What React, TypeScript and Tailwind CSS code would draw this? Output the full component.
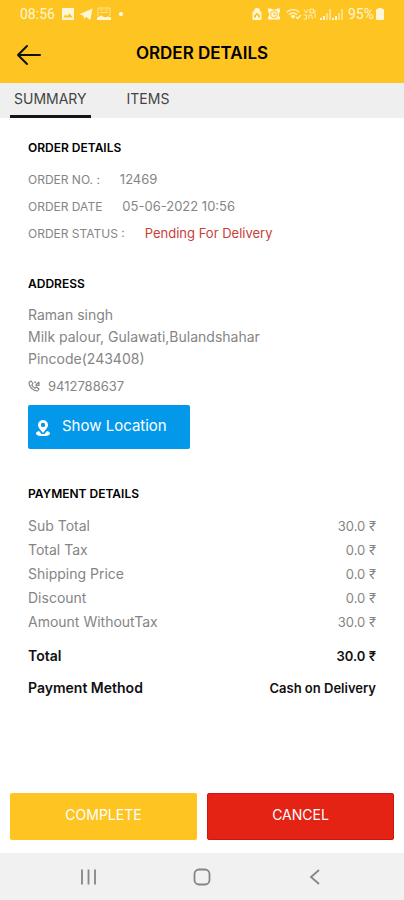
import React from 'react';

const charges = [
  { label: 'Sub Total', amount: '30.0' },
  { label: 'Total Tax', amount: '0.0' },
  { label: 'Shipping Price', amount: '0.0' },
  { label: 'Discount', amount: '0.0' },
  { label: 'Amount WithoutTax', amount: '30.0' },
];

const SignalIcon: React.FC = () => (
  <svg className="w-3 h-3" viewBox="0 0 12 12" fill="currentColor" aria-hidden="true">
    <path d="M0 12v-2h2v2zM3 12V8h2v4z" />
    <path d="M6 12V5h2v7zM9 12V1h2v11z" opacity=".55" />
  </svg>
);

const StatusBar: React.FC = () => (
  <div className="h-7 px-5 flex items-center justify-between text-[#fff6d8] text-sm">
    <div className="flex items-center">
      <span className="mr-1.5">08:56</span>
      <svg className="w-3.5 h-3.5 mr-1" viewBox="0 0 14 14" aria-hidden="true">
        <path fill="currentColor" fillRule="evenodd" d="M1 1h12v12H1zm1.500 9.500h9L8.700 6.500 6 9 4.200 7.500z" />
      </svg>
      <svg className="w-3.5 h-3.5 mr-1" viewBox="0 0 14 14" aria-hidden="true">
        <path fill="currentColor" d="M0.500 7.300 13.500 1.500 11.300 13 7 9.800 5 12 4.500 8.700z" />
      </svg>
      <svg className="w-3.5 h-3.5" viewBox="0 0 14 14" fill="none" stroke="currentColor" aria-hidden="true">
        <path d="M1 9V1h12v8M3 3h3M8 3h3M3 5.500h8" opacity=".6" />
        <path d="M0 13v-2.500l4-2 4 2 3-1 3 1V13z" fill="currentColor" stroke="none" />
      </svg>
      <span className="ml-2 w-1 h-1 rounded-full bg-white"></span>
    </div>

    <div className="flex items-center">
      <svg className="w-2.5 h-3 mr-1.5" viewBox="0 0 10 12" aria-hidden="true">
        <path fill="currentColor" fillRule="evenodd" d="M2 3a3 3 0 0 1 6 0l1.500 1v7a1 1 0 0 1-1 1h-7a1 1 0 0 1-1-1V4zM2 9.500h6V7.500L5 4.500l-3 3zM4 7.500h2v2H4z" />
      </svg>
      <svg className="w-3 h-3 mr-1.5" viewBox="0 0 12 12" aria-hidden="true">
        <path fill="currentColor" d="M0 .500h3l1 1h4l1-1h3V4l-1 1v3l1 1v2.500H0V9l1-1V5L0 4z" />
        <circle cx="6" cy="6.200" r="3.500" fill="none" stroke="#fec421" />
        <path d="M6 4v2.500h2" fill="none" stroke="#fec421" />
      </svg>
      <svg className="w-4 h-3" viewBox="0 0 16 12" fill="none" stroke="currentColor" strokeWidth="1.300" aria-hidden="true">
        <path d="M.8 4.200a9 9 0 0 1 12.400 0M3 6.500a6 6 0 0 1 8 0" />
        <path d="M4.500 8 7 11l2.500-3a4 4 0 0 0-5 0z" fill="currentColor" stroke="none" />
        <path d="m10 9 1.500 1.500L15 7" />
      </svg>
      <svg className="w-4 h-3 mr-0.5" viewBox="0 0 16 12" fill="none" stroke="currentColor" aria-hidden="true">
        <path d="M2 1.500 4 5l2-3.500M8 1.200h3.500v3.600H8zM1.500 7h3v4h-3M7 10.800V7h2.500l1 4M13 2v8" opacity=".85" />
      </svg>
      <SignalIcon />
      <SignalIcon />
      <span className="ml-1">95%</span>
      <svg className="w-2 h-3 ml-0.5" viewBox="0 0 8 12" aria-hidden="true">
        <path fill="currentColor" d="M2 0h4v1h1a1 1 0 0 1 1 1v9a1 1 0 0 1-1 1H1a1 1 0 0 1-1-1V2a1 1 0 0 1 1-1h1z" />
      </svg>
    </div>
  </div>
);

const Header: React.FC = () => (
  <header className="bg-[#fec421] font-[Roboto,sans-serif]">
    <StatusBar />
    <div className="h-[55px] px-4 pb-1 grid grid-cols-[28px_1fr_28px] items-center font-[Inter,sans-serif]">
      <button type="button" aria-label="Back" className="h-7 flex items-center">
        <svg className="w-[26px] h-6" viewBox="0 0 26 24" fill="none" stroke="#111" strokeWidth="2" strokeLinecap="round" strokeLinejoin="round">
          <path d="M24 13H2M11 4 2 13l9 9" />
        </svg>
      </button>
      <h1 className="text-[17px] font-semibold text-center text-black">ORDER DETAILS</h1>
    </div>
  </header>
);

const Tabs: React.FC = () => (
  <nav className="bg-[#efefef] h-[35px] pl-[10px] flex text-sm text-[#444]">
    <button type="button" className="px-1 border-b-3 border-[#151515]">SUMMARY</button>
    <button type="button" className="ml-8 px-1 border-b-3 border-transparent">ITEMS</button>
  </nav>
);

const App: React.FC = () => {
  return (
    <div className="min-h-screen flex flex-col bg-white text-sm text-[#858585] font-[Inter,sans-serif]">
      <Header />
      <Tabs />

      <main className="flex-grow px-7 pt-5 pb-7">
        <section>
          <h2 className="text-xs leading-5 font-semibold text-black">ORDER DETAILS</h2>
          <div className="mt-2 text-[13px] leading-[27px]">
            <p className="flex gap-5"><span className="text-xs leading-[27px]">ORDER NO. :</span><span>12469</span></p>
            <p className="flex gap-5"><span className="text-xs leading-[27px]">ORDER DATE</span><span>05-06-2022 10:56</span></p>
            <p className="flex gap-5">
              <span className="text-xs leading-[27px]">ORDER STATUS :</span>
              <span className="text-[#c8403a]">Pending For Delivery</span>
            </p>
          </div>
        </section>

        <section className="mt-[27px]">
          <h2 className="text-xs leading-5 font-semibold text-black">ADDRESS</h2>
          <address className="mt-[10px] not-italic leading-[22px]">
            <p>Raman singh</p>
            <p>Milk palour, Gulawati,Bulandshahar</p>
            <p>Pincode(243408)</p>
            <p className="mt-[5px] flex items-center gap-2 text-[13px] leading-[22px]">
              <svg className="w-3 h-3" viewBox="0 0 12 12" fill="none" stroke="currentColor" strokeWidth="1.200" strokeLinejoin="round" aria-hidden="true">
                <path d="M1 2.500 3 1l2 2.500L3.800 5c.7 1.500 1.700 2.500 3.200 3.200L8.500 7 11 9l-1.500 2C5 11 1 7 1 2.500z" />
                <path d="M6.500 1.500 8 3M11 2v3.500H7.500M11 2 7.500 5.500" />
              </svg>
              9412788637
            </p>
          </address>
          <button type="button" className="mt-2 h-11 w-[162px] pl-2 pb-0.5 flex items-center gap-3 rounded-xs bg-[#0398ea] text-white text-[15px]">
            <svg className="w-3.5 h-4 mt-1" viewBox="0 0 14 16" aria-hidden="true">
              <path fill="currentColor" fillRule="evenodd" d="M7 0a5 5 0 0 1 5 5c0 3-3 5-5 8-2-3-5-5-5-8a5 5 0 0 1 5-5zm0 2.700a2.200 2.200 0 1 0 0 4.400 2.200 2.200 0 0 0 0-4.400z" />
              <path fill="currentColor" d="M3 11 5.500 14h3L11 11c2 .5 3 1.300 3 2.400C14 15 11 16 7 16s-7-1-7-2.600C0 12.300 1 11.500 3 11z" />
            </svg>
            Show Location
          </button>
        </section>

        <section className="mt-[35px]">
          <h2 className="text-xs leading-5 font-semibold text-black">PAYMENT DETAILS</h2>
          <dl className="mt-[10px] leading-6">
            {charges.map((charge) => (
              <div key={charge.label} className="flex justify-between">
                <dt>{charge.label}</dt>
                <dd className="text-[13px] leading-6">{charge.amount} ₹</dd>
              </div>
            ))}
            <div className="mt-[10px] flex justify-between font-semibold text-[#111]">
              <dt>Total</dt>
              <dd className="text-[13px] leading-6">30.0 ₹</dd>
            </div>
            <div className="mt-2 flex justify-between font-semibold text-[#111]">
              <dt>Payment Method</dt>
              <dd className="text-[13px] leading-6">Cash on Delivery</dd>
            </div>
          </dl>
        </section>
      </main>

      <div className="px-[10px] pb-[13px] grid grid-cols-2 gap-[10px] text-sm text-white">
        <button type="button" className="h-[47px] pb-1 rounded-xs bg-[#fec421]">COMPLETE</button>
        <button type="button" className="h-[47px] pb-1 rounded-xs bg-[#e42314] border border-[#d01510]">CANCEL</button>
      </div>

      <footer className="h-[47px] pl-[76px] pr-[77px] flex items-center justify-between bg-[#f1f1f1] text-[#858585]">
        <button type="button" aria-label="Recent apps">
          <svg className="w-6 h-6" viewBox="0 0 24 24" stroke="currentColor" strokeWidth="1.800">
            <path d="M6 4.500v15M12.500 4.500v15M19 4.500v15" />
          </svg>
        </button>
        <button type="button" aria-label="Home">
          <svg className="w-6 h-6" viewBox="0 0 24 24" fill="none" stroke="currentColor" strokeWidth="1.800">
            <rect x="4.500" y="4.500" width="15" height="15" rx="4.500" />
          </svg>
        </button>
        <button type="button" aria-label="Go back">
          <svg className="w-6 h-6" viewBox="0 0 24 24" fill="none" stroke="currentColor" strokeWidth="1.800">
            <path d="m16 5-8 7 8 7" />
          </svg>
        </button>
      </footer>
    </div>
  );
};

export default App;
